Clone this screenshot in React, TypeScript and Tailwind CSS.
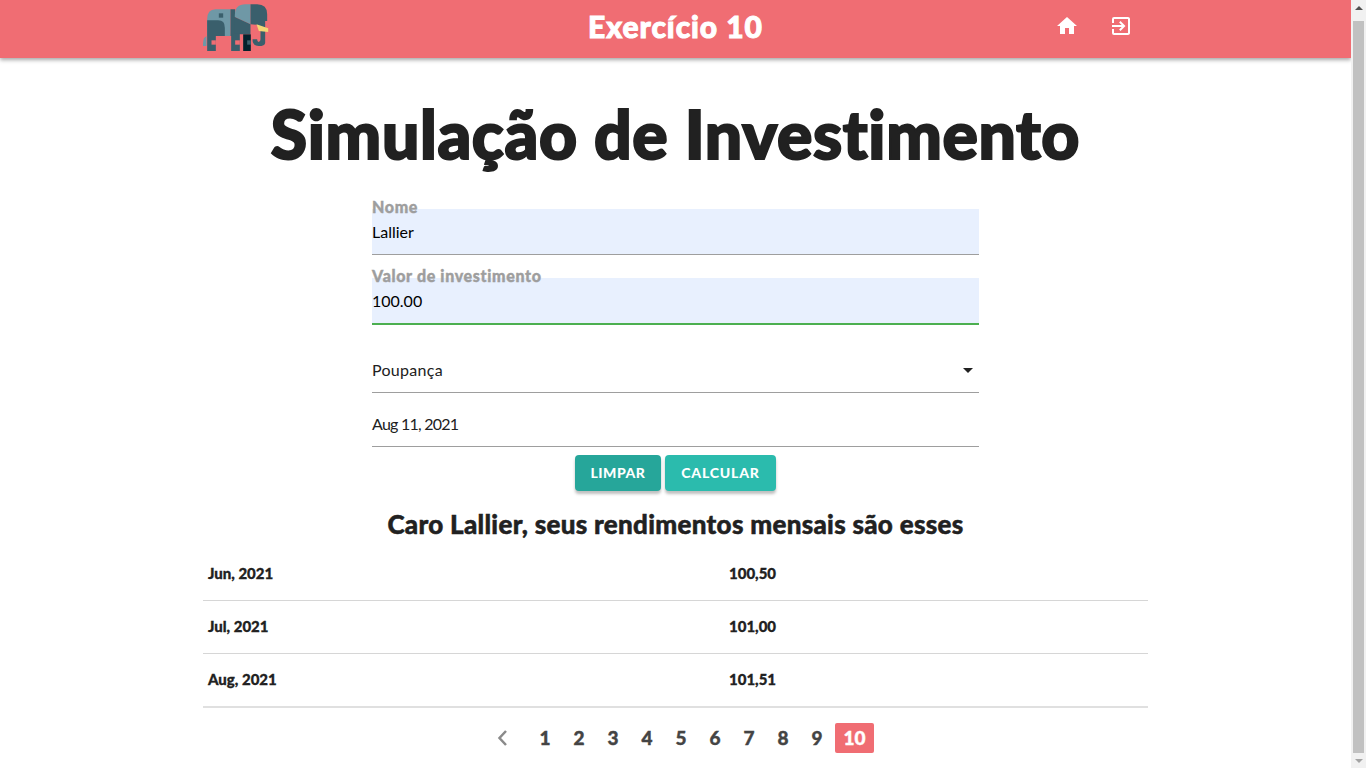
const display = "font-['Lato',sans-serif] font-black";

function Elephant() {
  return (
    <svg width="67" height="50" viewBox="40 0 200 150" className="block">
      <path d="M38 135l4-23 8-7v30z" fill="#6f98a6" />
      <path d="M52 55q0-30 25-30h45v80H52z" fill="#6f98a6" />
      <rect x="87" y="37" width="13" height="13" fill="#3a5f6c" />
      <path d="M52 58h33q20 0 20 22v25H78v45H52z" fill="#3a5f6c" />
      <rect x="65" y="118" width="13" height="13" fill="#f06d73" />
      <path d="M122 25h14v25l24 20v30h-10v50h-26v-45h-2z" fill="#3a5f6c" />
      <rect x="136" y="118" width="14" height="13" fill="#f06d73" />
      <path d="M135 42q0-32 32-32h15v60l-47-22z" fill="#6f98a6" />
      <path d="M182 10h20q30 0 30 30v20l-6 0v65q0 10-20 10-18 0-18-20h14q0 8 4 8 6 0 6-8V85l-12-14-18-1z" fill="#3a5f6c" />
      <path d="M135 48l47 22v30h-22v-2h-25z" fill="#3a5f6c" />
      <path d="M200 70l35 12v11l-28-3z" fill="#f4d675" />
      <rect x="160" y="100" width="23" height="50" fill="#03222d" />
      <rect x="172" y="118" width="11" height="13" fill="#3a5f6c" />
    </svg>
  );
}

function Field({ label, value, focused }: { label: string; value: string; focused?: boolean }) {
  return (
    <div className="relative h-[69px] pt-[11px]">
      <div className={`bg-[#e8f0fe] pt-[12px] text-[16px] leading-[22px] text-black ${focused ? "h-[47px] border-b-2 border-[#4caf50]" : "h-[46px] border-b border-[#9e9e9e]"}`}>
        {value}
      </div>
      <span className={`absolute left-0 top-0 text-[16px] leading-[18px] tracking-[0.65px] text-[#9e9e9e] [-webkit-text-stroke:0.4px_#9e9e9e] ${display}`}>{label}</span>
    </div>
  );
}

const rows = [
  ["Jun, 2021", "100,50"],
  ["Jul, 2021", "101,00"],
  ["Aug, 2021", "101,51"],
];

export default function App() {
  return (
    <div className="flex h-screen w-full overflow-hidden bg-white font-['Lato',sans-serif] text-[#212121]">
      <div className="min-w-0 flex-1">
        <header className="h-[58px] bg-[#f06d73] shadow-[0_2px_4px_rgba(0,0,0,0.35)]">
          <div className="mx-auto flex h-full w-[945px] items-start justify-between">
            <div className="w-[160px] pt-[1px]"><Elephant /></div>
            <h2 className={`pt-[9px] text-[30px] leading-[34px] tracking-[0.95px] text-white [-webkit-text-stroke:1px_#fff] ${display}`}>Exercício 10</h2>
            <div className="flex w-[160px] items-center justify-end gap-[30px] pr-[15px] pt-[14px] text-white">
              <svg width="24" height="24" viewBox="0 0 24 24" fill="currentColor"><path d="M10 20v-6h4v6h5v-8h3L12 3 2 12h3v8z" /></svg>
              <svg width="24" height="24" viewBox="0 0 24 24" fill="currentColor"><path d="M10.09 15.59 11.5 17l5-5-5-5-1.41 1.41L12.67 11H3v2h9.67l-2.58 2.59zM19 3H5a2 2 0 0 0-2 2v4h2V5h14v14H5v-4H3v4a2 2 0 0 0 2 2h14c1.1 0 2-.9 2-2V5c0-1.1-.9-2-2-2z" /></svg>
            </div>
          </div>
        </header>
        <main className="mx-auto w-[945px]">
          <h1 className={`mt-[34px] h-[84px] text-center text-[66px] leading-[84px] tracking-[0.65px] [-webkit-text-stroke:2px_#212121] ${display}`}>Simulação de Investimento</h1>
          <form className="mx-auto mt-[22px] w-[607px]">
            <Field label="Nome" value="Lallier" />
            <Field label="Valor de investimento" value="100.00" focused />
            <div className="mt-[11px] flex h-[46px] items-center justify-between border-b border-[#9e9e9e] pt-[1px] text-[16px] tracking-[0.3px]">
              <span>Poupança</span>
              <span className="mr-[6px] h-0 w-0 border-x-[5px] border-t-[5px] border-x-transparent border-t-[#212121]" />
            </div>
            <div className="mt-[8px] flex h-[46px] items-center border-b border-[#9e9e9e] pt-[1px] text-[16px] tracking-[-0.75px]">Aug 11, 2021</div>
            <div className="mt-[8px] flex justify-center gap-[4px]">
              <button type="button" className={`h-[36px] w-[86px] rounded-[4px] bg-[#26a69a] pb-[2px] text-[14px] tracking-[0.5px] text-white shadow-[0_3px_3px_rgba(0,0,0,0.25)] ${display}`}>LIMPAR</button>
              <button type="button" className={`h-[36px] w-[111px] rounded-[4px] bg-[#2bbbad] pb-[2px] text-[14px] tracking-[0.8px] text-white shadow-[0_3px_3px_rgba(0,0,0,0.25)] ${display}`}>CALCULAR</button>
            </div>
          </form>
          <h3 className={`mt-[18px] text-center text-[26px] leading-[30px] tracking-[0.3px] [-webkit-text-stroke:0.5px_#212121] ${display}`}>Caro Lallier, seus rendimentos mensais são esses</h3>
          <table className="mt-[8px] w-full border-collapse border-b-2 border-[#e0e0e0] text-[15px]">
            <tbody>
              {rows.map(([a, b], i) => (
                <tr key={a} className={`${i < 2 ? "h-[53px] border-b border-[#d6d6d6]" : "h-[54px]"}`}>
                  <td className={`w-[521px] pl-[5px] ${i === 2 ? "pb-[1px]" : ""} [-webkit-text-stroke:0.3px_#212121] ${display}`}>{a}</td>
                  <td className={`pl-[5px] ${i === 2 ? "pb-[1px]" : ""} [-webkit-text-stroke:0.3px_#212121] ${display}`}>{b}</td>
                </tr>
              ))}
            </tbody>
          </table>
          <nav className={`ml-[14px] mt-[14px] flex h-[31px] items-center justify-center text-[19px] text-[#444] [-webkit-text-stroke:0.4px_#444] ${display}`}>
            <svg width="24" height="24" viewBox="0 0 24 24" fill="none" stroke="#8a8a8a" strokeWidth="2.5" className="mr-[13px]"><path d="M15 5l-6.5 7 6.5 7" /></svg>
            {[1, 2, 3, 4, 5, 6, 7, 8, 9].map((n) => (
              <span key={n} className="flex w-[34px] justify-center pt-[1px]">{n}</span>
            ))}
            <span className="ml-[1px] flex h-[30px] w-[39px] items-center justify-center rounded-[2px] bg-[#f06d73] pt-[1px] text-white [-webkit-text-stroke:0.4px_#fff]">10</span>
          </nav>
        </main>
      </div>
      <aside className="flex h-full w-[15px] shrink-0 flex-col items-center bg-[#f1f1f1]">
        <div className="flex h-[21px] items-center justify-center pb-[5px]">
          <span className="h-0 w-0 border-x-[4px] border-b-[4px] border-x-transparent border-b-[#505050]" />
        </div>
        <div className="w-[11px] flex-1 bg-[#c1c1c1]" />
        <div className="flex h-[15px] items-center justify-center">
          <span className="h-0 w-0 border-x-[4px] border-t-[4px] border-x-transparent border-t-[#a3a3a3]" />
        </div>
      </aside>
    </div>
  );
}
